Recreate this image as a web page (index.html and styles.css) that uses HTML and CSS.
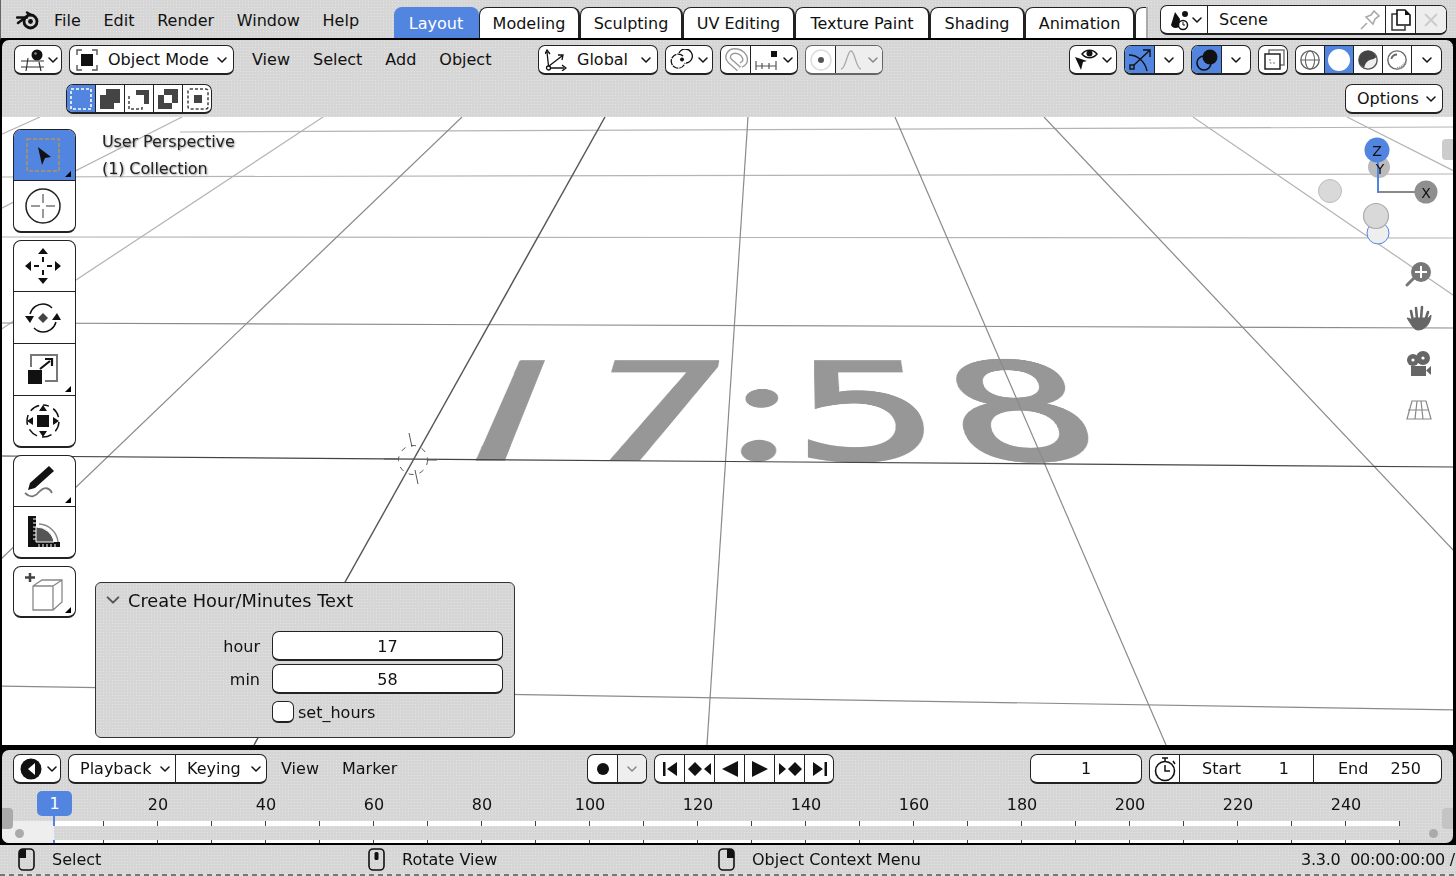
FILE: index.html
```html
<!DOCTYPE html>
<html lang="en">
<head>
    <meta charset="UTF-8">
    <title>Blender 3.3 - Layout</title>
    <link rel="stylesheet" href="styles.css">
</head>
<body>
<svg class="defs" width="0" height="0">
    <symbol id="chev" viewBox="0 0 10 6"><path d="M1 1l4 4 4-4" fill="none" stroke="currentColor" stroke-width="1.5" stroke-linecap="round" stroke-linejoin="round"/></symbol>
    <symbol id="corner" viewBox="0 0 6 6"><path d="M6 0v6H0z"/></symbol>
    <symbol id="mouse" viewBox="0 0 18 24"><rect x="1" y="1" width="15" height="21" rx="4" fill="none" stroke="#111" stroke-width="1.6"/></symbol>
</svg>

<div class="app">
    <!-- top bar -->
    <header class="topbar">
        <svg class="logo" width="24" height="20" viewBox="0 0 24 20"><circle cx="14.5" cy="11.5" r="6.5" fill="none" stroke="#111" stroke-width="2.8"/><circle cx="14.5" cy="11.5" r="2.4" fill="#111"/><path d="M11 2.5L15 5M1 7.5h10M2 13l8-6" stroke="#111" stroke-width="2.4" stroke-linecap="round"/></svg>
        <nav class="menu menu-top"><span>File</span><span>Edit</span><span>Render</span><span>Window</span><span>Help</span></nav>
        <div class="tabs">
            <span class="tab tab-active">Layout</span>
            <span class="tab tab-modeling">Modeling</span>
            <span class="tab tab-sculpting">Sculpting</span>
            <span class="tab tab-uv">UV Editing</span>
            <span class="tab tab-texture">Texture Paint</span>
            <span class="tab tab-shading">Shading</span>
            <span class="tab tab-animation">Animation</span>
            <span class="tab tab-cut"></span>
        </div>
        <div class="group scene">
            <span class="cell cell-scene-icon">
                <svg width="22" height="22" viewBox="0 0 22 22"><path d="M6 3l5 7-1 8c-3 2-7 1-8-2z" fill="#111"/><circle cx="16" cy="5" r="3" fill="#111"/><circle cx="14" cy="16" r="4.5" fill="#fff" stroke="#111" stroke-width="1.5"/><path d="M14 13v3h2" stroke="#111" fill="none"/></svg>
                <svg class="chev" width="10" height="6"><use href="#chev"/></svg>
            </span>
            <span class="cell cell-scene-name">Scene
                <svg width="22" height="22" viewBox="0 0 22 22"><path d="M2 20l6-6M7 8l7 7 2-5 4-3-5-5-3 4z" fill="none" stroke="#aaa" stroke-width="1.6"/></svg>
            </span>
            <span class="cell cell-icon">
                <svg width="22" height="22" viewBox="0 0 22 22"><path d="M7 5H2v16h13v-4" fill="none" stroke="#333" stroke-width="1.5"/><path d="M7 1h8l5 5v10H7z" fill="#fff" stroke="#111" stroke-width="1.6"/><path d="M15 1l5 5h-5z" fill="#111"/></svg>
            </span>
            <span class="cell cell-icon cell-off">
                <svg width="16" height="16" viewBox="0 0 16 16"><path d="M2 2l12 12M14 2L2 14" stroke="#ccc" stroke-width="2"/></svg>
            </span>
        </div>
    </header>

    <!-- 3d viewport -->
    <section class="area area-view">
        <div class="view-header">
            <div class="row row-first">
                <span class="group w-editor"><span class="cell cell-between">
                    <svg width="26" height="24" viewBox="0 0 26 24"><circle cx="17" cy="7" r="5.5" fill="#111"/><circle cx="15.500" cy="5.500" r="1.300" fill="#888"/><path d="M1 13h23M1 19h23M8 10l-2 13M19 14l2 9" stroke="#333" stroke-width="1.2" fill="none"/></svg>
                    <svg class="chev" width="10" height="6"><use href="#chev"/></svg>
                </span></span>
                <span class="group w-mode"><span class="cell cell-between">
                    <svg width="22" height="22" viewBox="0 0 22 22"><path d="M1 6V1h5M16 1h5v5M21 16v5h-5M6 21H1v-5" fill="none" stroke="#555" stroke-width="1.4"/><rect x="5" y="5" width="12" height="12" fill="#111"/></svg>
                    <span class="grow">Object Mode</span>
                    <svg class="chev" width="10" height="6"><use href="#chev"/></svg>
                </span></span>
                <nav class="menu menu-view"><span>View</span><span>Select</span><span>Add</span><span>Object</span></nav>
                <span class="group w-global"><span class="cell cell-between">
                    <svg width="22" height="22" viewBox="0 0 22 22"><circle cx="3.5" cy="19" r="2" fill="none" stroke="#111" stroke-width="1.3"/><path d="M3.5 17L2 3M0 5l2-4 3 4M5 19h14M17 16l4 3-4 3M4 17L17 7M13 6l5 0-1 5" fill="none" stroke="#111" stroke-width="1.3"/></svg>
                    <span class="grow">Global</span>
                    <svg class="chev" width="10" height="6"><use href="#chev"/></svg>
                </span></span>
                <span class="group w-pivot"><span class="cell cell-between">
                    <svg width="24" height="22" viewBox="0 0 24 22"><path d="M9 4a7 7 0 1 1 7 10" fill="none" stroke="#111" stroke-width="1.300"/><path d="M13 7a7 7 0 1 0 2 7" fill="none" stroke="#111" stroke-width="1.300" stroke-dasharray="6 1"/><circle cx="12" cy="10.500" r="2" fill="#111"/></svg>
                    <svg class="chev" width="10" height="6"><use href="#chev"/></svg>
                </span></span>
                <span class="group w-snap">
                    <span class="cell cell-icon">
                        <svg width="24" height="24" viewBox="0 0 24 24"><path d="M15 21L6 13C2 9 5 3 11 3c6 0 11 5 10 10-.5 2-2 3-4 4" fill="none" stroke="#999" stroke-width="6" stroke-linejoin="round"/><path d="M15 21L6 13C2 9 5 3 11 3c6 0 11 5 10 10-.5 2-2 3-4 4" fill="none" stroke="#fff" stroke-width="3.200"/></svg>
                    </span>
                    <span class="cell cell-between">
                        <svg width="22" height="24" viewBox="0 0 22 24"><rect x="16" y="3" width="6" height="6" fill="#111"/><path d="M1 13v9M21 13v9M1 18h20M7 15v6M14 15v6" stroke="#555" stroke-width="1.2"/></svg>
                        <svg class="chev" width="10" height="6"><use href="#chev"/></svg>
                    </span>
                </span>
                <span class="group w-prop">
                    <span class="cell cell-icon">
                        <svg width="22" height="22" viewBox="0 0 22 22"><circle cx="11" cy="11" r="10" fill="none" stroke="#ddd" stroke-width="1.5"/><circle cx="11" cy="11" r="3" fill="#555"/></svg>
                    </span>
                    <span class="cell cell-between cell-off">
                        <svg width="22" height="22" viewBox="0 0 22 22"><path d="M1 20c5 0 6-18 10-18s5 18 10 18" fill="none" stroke="#aaa" stroke-width="1.3"/></svg>
                        <svg class="chev chev-off" width="10" height="6"><use href="#chev"/></svg>
                    </span>
                </span>

                <span class="group w-vis push"><span class="cell cell-between">
                    <svg width="24" height="24" viewBox="0 0 24 24"><path d="M1 9l12 4-4 1-2 8z" fill="#111"/><path d="M8 6c4-5 11-5 15 0-4 5-11 5-15 0z" fill="#fff" stroke="#111" stroke-width="1.4"/><circle cx="15.5" cy="5.5" r="3" fill="#111"/></svg>
                    <svg class="chev" width="10" height="6"><use href="#chev"/></svg>
                </span></span>
                <span class="group w-gizmo">
                    <span class="cell cell-icon cell-on">
                        <svg width="24" height="24" viewBox="0 0 24 24"><rect x="2" y="17" width="4" height="4" fill="none" stroke="#111" stroke-width="1.4"/><path d="M1 7c8 0 16 6 18 16M6 17L21 3M15 2h7v7" fill="none" stroke="#111" stroke-width="1.4"/></svg>
                    </span>
                    <span class="cell cell-chev"><svg class="chev" width="10" height="6"><use href="#chev"/></svg></span>
                </span>
                <span class="group w-gizmo">
                    <span class="cell cell-icon cell-on">
                        <svg width="24" height="24" viewBox="0 0 24 24"><circle cx="15" cy="9" r="7.5" fill="#111"/><circle cx="9" cy="15" r="7" fill="none" stroke="#111" stroke-width="1.6"/></svg>
                    </span>
                    <span class="cell cell-chev"><svg class="chev" width="10" height="6"><use href="#chev"/></svg></span>
                </span>
                <span class="group w-xray"><span class="cell cell-icon">
                    <svg width="24" height="24" viewBox="0 0 24 24"><path d="M7 6V2h15v15h-4" fill="none" stroke="#777" stroke-width="1.5"/><rect x="3" y="6" width="15" height="15" fill="none" stroke="#222" stroke-width="1.5"/><path d="M8 11v4h5" fill="none" stroke="#777" stroke-dasharray="2 1.5"/></svg>
                </span></span>
                <span class="group w-shading">
                    <span class="cell cell-icon"><svg width="22" height="22" viewBox="0 0 24 24"><circle cx="12" cy="12" r="10" fill="none" stroke="#666" stroke-width="1.5"/><ellipse cx="12" cy="12" rx="5" ry="10" fill="none" stroke="#666" stroke-width="1.2"/><path d="M2 12h20" stroke="#666" stroke-width="1.2"/></svg></span>
                    <span class="cell cell-icon cell-on"><svg width="24" height="24" viewBox="0 0 24 24"><circle cx="12" cy="12" r="11" fill="#fff"/></svg></span>
                    <span class="cell cell-icon"><svg width="22" height="22" viewBox="0 0 24 24"><circle cx="12" cy="12" r="10" fill="#eee" stroke="#555" stroke-width="1.5"/><path d="M12 2a10 10 0 0 0-10 10c0 4 3 7 6 8 1-5 4-8 10-9l3-2c-2-4-5-7-9-7z" fill="#444"/></svg></span>
                    <span class="cell cell-icon"><svg width="22" height="22" viewBox="0 0 24 24"><circle cx="12" cy="12" r="10" fill="none" stroke="#666" stroke-width="1.5"/><path d="M6 11c0-3 3-5 6-5" fill="none" stroke="#666" stroke-width="2"/><path d="M21 15c-2 4-5 6-9 6" fill="none" stroke="#999" stroke-width="3" stroke-dasharray="1.5 1"/></svg></span>
                    <span class="cell cell-chev"><svg class="chev" width="10" height="6"><use href="#chev"/></svg></span>
                </span>
            </div>
            <div class="row row-second">
                <span class="group w-selmode">
                    <span class="cell cell-icon cell-on"><svg width="22" height="22" viewBox="0 0 22 22"><rect x="1" y="1" width="20" height="20" fill="none" stroke="#fff" stroke-width="1.6" stroke-dasharray="3 2"/></svg></span>
                    <span class="cell cell-icon"><svg width="22" height="22" viewBox="0 0 22 22"><path d="M7 1h14v14h-6v6H1V7h6z" fill="#444"/></svg></span>
                    <span class="cell cell-icon"><svg width="22" height="22" viewBox="0 0 22 22"><path d="M8 2h13v14h-5V7H8z" fill="#444"/><path d="M1 8v13h13v-3" fill="none" stroke="#444" stroke-width="1.5" stroke-dasharray="3 2"/></svg></span>
                    <span class="cell cell-icon"><svg width="22" height="22" viewBox="0 0 22 22"><path d="M7 1h14v14h-6v6H1V7h6zM7 7v8h8V7z" fill="#444" fill-rule="evenodd"/></svg></span>
                    <span class="cell cell-icon"><svg width="22" height="22" viewBox="0 0 22 22"><rect x="1" y="1" width="20" height="20" rx="2" fill="none" stroke="#444" stroke-width="1.5" stroke-dasharray="3 2"/><rect x="7" y="7" width="8" height="8" fill="#444"/></svg></span>
                </span>
                <span class="group w-options push"><span class="cell cell-between"><span>Options</span><svg class="chev" width="10" height="6"><use href="#chev"/></svg></span></span>
            </div>
        </div>

        <div class="viewport">
            <div class="clock-text"><span class="clock-one">1</span>7<span class="clock-colon">:</span><span class="clock-five">5</span>8</div>

            <svg class="grid" width="1456" height="628" viewBox="0 117 1456 628">
                <g stroke="#b4b4b4" stroke-width="1.200" fill="none">
                    <path d="M180 132L1456 127"/>
                    <path d="M0 177L1456 174"/>
                    <path d="M0 237L1456 238"/>
                    <path d="M0 135L40 117"/>
                    <path d="M0 209L182 117"/>
                    <path d="M0 330L323 117"/>
                    <path d="M1193 117L1456 297"/>
                    <path d="M1347 117L1456 172"/>
                </g>
                <g stroke="#8a8a8a" stroke-width="1.200" fill="none">
                    <path d="M0 323L1456 328"/>
                    <path d="M0 560L462 117"/>
                    <path d="M0 686L1456 710"/>
                    <path d="M748 117L707 745"/>
                    <path d="M895 117L1166 745"/>
                    <path d="M1044 117L1456 553"/>
                </g>
                <path d="M0 456L1456 467" stroke="#444" stroke-width="1.200" fill="none"/>
                <path d="M605 117L254 745" stroke="#555" stroke-width="1.400" fill="none"/>
                <g fill="none" stroke="#555" stroke-width="1">
                    <circle cx="413" cy="460" r="14.5" stroke-dasharray="5 6"/>
                    <path d="M409 433l3 14M415 470l3 14M384 459h14M427 460h10"/>
                </g>

                <circle cx="1379" cy="167" r="11" fill="#bbb"/>
                <path d="M1378 192h38" stroke="#888" stroke-width="2"/>
                <path d="M1378 160v33" stroke="#5285e0" stroke-width="2"/>
                <circle cx="1377" cy="150" r="12.5" fill="#5285e0"/>
                <circle cx="1426" cy="192" r="11.5" fill="#8f8f8f"/>
                <circle cx="1330" cy="191" r="11.5" fill="#d9d9d9" stroke="#bbb"/>
                <circle cx="1378" cy="233" r="11" fill="#eee" stroke="#5285e0"/>
                <circle cx="1376" cy="216" r="12.5" fill="#d9d9d9" stroke="#aaa" stroke-width="1.2"/>
                <g class="axis-label">
                    <text x="1377" y="156">Z</text>
                    <text x="1380" y="174" fill="#555">Y</text>
                    <text x="1426" y="198">X</text>
                </g>

                <g fill="#777">
                    <circle cx="1421" cy="272" r="10"/>
                    <path d="M1414 278l-7 7" stroke="#777" stroke-width="3" stroke-linecap="round"/>
                    <path d="M1421 266v12M1415 272h12" stroke="#fff" stroke-width="2"/>
                </g>
                <g fill="#666" stroke="#666">
                    <path d="M1413 321l-2-10M1417 319l-1-11M1421 319l1-12M1425 321l3-9" stroke-width="2.600" stroke-linecap="round" fill="none"/>
                    <path d="M1407 318c3 0 5 2 6 3l1-3h13c2 0 3-2 4-3 0 7-5 15-13 15-5 0-8-8-11-12z"/>
                </g>
                <g fill="#666">
                    <circle cx="1413" cy="360" r="6"/>
                    <circle cx="1423" cy="358" r="7"/>
                    <rect x="1411" y="366" width="15" height="10"/>
                    <path d="M1431 366v9l-5-4.500z"/>
                    <circle cx="1413" cy="360" r="1.600" fill="#fff"/>
                    <circle cx="1423" cy="358" r="1.600" fill="#fff"/>
                </g>
                <g fill="none" stroke="#888" stroke-width="1.2">
                    <path d="M1412 401h14l5 18h-24z"/>
                    <path d="M1408 410h21M1417 401l-2 18M1421 401l2 18"/>
                </g>
            </svg>

            <div class="view-info">
                <div>User Perspective</div>
                <div>(1) Collection</div>
            </div>

            <div class="handle-view"></div>

            <aside class="toolbar">
                <div class="tool-group">
                    <span class="tool tool-on">
                        <svg width="36" height="36" viewBox="0 0 36 36"><rect x="2" y="2" width="32" height="32" fill="none" stroke="#9c8f7c" stroke-width="2" stroke-dasharray="4 2"/><path d="M13 10l13 10-6 1-3 7z" fill="#111"/></svg>
                        <svg class="corner" width="6" height="6"><use href="#corner"/></svg>
                    </span>
                    <span class="tool">
                        <svg width="36" height="36" viewBox="0 0 36 36"><circle cx="18" cy="18" r="17" fill="none" stroke="#222" stroke-width="1.5"/><path d="M18 6v9M18 21v9M6 18h9M21 18h9" stroke="#777" stroke-width="1.5"/></svg>
                    </span>
                </div>
                <div class="tool-group">
                    <span class="tool">
                        <svg width="36" height="36" viewBox="0 0 36 36"><path d="M18 0l5 6H13zM18 36l-5-6h10zM0 18l6-5v10zM36 18l-6 5V13z" fill="#111"/><path d="M18 9v5M18 22v5M9 18h5M22 18h5" stroke="#111" stroke-width="2"/></svg>
                    </span>
                    <span class="tool">
                        <svg width="36" height="36" viewBox="0 0 36 36"><path d="M18 13l5 5-5 5-5-5z" fill="#444"/><path d="M5 14C7 7 13 4 18 4c4 0 7 2 9 4M31 22c-2 7-8 10-13 10-4 0-7-2-9-4" fill="none" stroke="#111" stroke-width="1.5"/><path d="M0 16h9l-4 7zM27 20h9l-4-7z" fill="#111"/></svg>
                    </span>
                    <span class="tool">
                        <svg width="36" height="36" viewBox="0 0 36 36"><path d="M6 15V3h26v26H20" fill="none" stroke="#777" stroke-width="2"/><rect x="3" y="18" width="14" height="14" fill="#111"/><path d="M15 17l10-8M20 7h7v7" stroke="#111" stroke-width="2.200" fill="none"/></svg>
                        <svg class="corner" width="6" height="6"><use href="#corner"/></svg>
                    </span>
                    <span class="tool">
                        <svg width="36" height="36" viewBox="0 0 36 36"><path d="M18 2a16 16 0 0 1 16 16 16 16 0 0 1-16 16A16 16 0 0 1 2 18 16 16 0 0 1 18 2z" fill="none" stroke="#111" stroke-width="1.500" stroke-dasharray="10 5" stroke-dashoffset="4"/><rect x="12" y="12" width="12" height="12" fill="#111"/><path d="M18 2l4 6h-8zM18 34l-4-6h8zM2 18l6-4v8zM34 18l-6 4v-8z" fill="#111"/></svg>
                    </span>
                </div>
                <div class="tool-group">
                    <span class="tool">
                        <svg width="40" height="36" viewBox="0 0 40 36"><path d="M26 3l5 5-19 17-7 2 2-7z" fill="#111"/><path d="M2 30c6 6 11 3 15-2 4-4 9-4 12 2" fill="none" stroke="#777" stroke-width="1.800"/></svg>
                        <svg class="corner" width="6" height="6"><use href="#corner"/></svg>
                    </span>
                    <span class="tool">
                        <svg width="36" height="36" viewBox="0 0 36 36"><path d="M3 2h8v26h24v5H3z" fill="#111"/><path d="M11 13a18 18 0 0 1 18 15H11z" fill="#555" stroke="#fff" stroke-width="1"/><path d="M14 10a20 20 0 0 1 19 18" fill="none" stroke="#888" stroke-width="1.500"/><path d="M8 5h3M8 9h3M8 13h3M8 17h3M8 21h3M8 25h3M14 30v3M18 30v3M22 30v3M26 30v3M30 30v3" stroke="#fff"/></svg>
                    </span>
                </div>
                <div class="tool-group">
                    <span class="tool">
                        <svg width="42" height="42" viewBox="0 0 42 42"><path d="M8 2v9M3 6.500h10" stroke="#444" stroke-width="2.500"/><path d="M11 15l9-6h20v22l-9 8H11zM11 15h20v24M31 15l9-6" fill="#fff" stroke="#888" stroke-width="1.300"/></svg>
                        <svg class="corner" width="6" height="6"><use href="#corner"/></svg>
                    </span>
                </div>
            </aside>

            <section class="op-panel">
                <div class="op-title">
                    <svg class="chev-panel" width="14" height="8"><use href="#chev"/></svg>
                    Create Hour/Minutes Text
                </div>
                <div class="op-row">
                    <label>hour</label>
                    <span class="op-field">17</span>
                </div>
                <div class="op-row">
                    <label>min</label>
                    <span class="op-field">58</span>
                </div>
                <div class="op-row op-row-check">
                    <label></label>
                    <span class="op-check"></span>
                    <span class="op-check-label">set_hours</span>
                </div>
            </section>
        </div>
    </section>

    <!-- timeline -->
    <section class="area area-time">
        <div class="row row-time">
            <span class="group w-editor"><span class="cell cell-between">
                <svg width="24" height="24" viewBox="0 0 24 24"><circle cx="12" cy="12" r="10.500" fill="#111"/><path d="M16 6l-7 6 7 6z" fill="#fff"/></svg>
                <svg class="chev" width="10" height="6"><use href="#chev"/></svg>
            </span></span>
            <span class="group w-playback">
                <span class="cell cell-between w-play"><span>Playback</span><svg class="chev" width="10" height="6"><use href="#chev"/></svg></span>
                <span class="cell cell-between w-key"><span>Keying</span><svg class="chev" width="10" height="6"><use href="#chev"/></svg></span>
            </span>
            <nav class="menu menu-time"><span>View</span><span>Marker</span></nav>
            <span class="group w-record">
                <span class="cell cell-icon"><svg width="14" height="14" viewBox="0 0 14 14"><circle cx="7" cy="7" r="6" fill="#111"/></svg></span>
                <span class="cell cell-icon cell-off"><svg class="chev chev-off" width="10" height="6"><use href="#chev"/></svg></span>
            </span>
            <span class="group w-transport">
                <span class="cell cell-icon"><svg width="16" height="16" viewBox="0 0 16 16"><path d="M1 1h2.500v14H1zM15 1v14L5 8z" fill="#111"/></svg></span>
                <span class="cell cell-icon"><svg width="24" height="16" viewBox="0 0 24 16"><path d="M7 1l7 7-7 7-7-7zM23 2v12l-7-6z" fill="#111"/></svg></span>
                <span class="cell cell-icon"><svg width="18" height="18" viewBox="0 0 18 18"><path d="M17 1v16L1 9z" fill="#111"/></svg></span>
                <span class="cell cell-icon"><svg width="18" height="18" viewBox="0 0 18 18"><path d="M1 1v16l16-8z" fill="#111"/></svg></span>
                <span class="cell cell-icon"><svg width="24" height="16" viewBox="0 0 24 16"><path d="M1 2v12l7-6zM17 1l7 7-7 7-7-7z" fill="#111"/></svg></span>
                <span class="cell cell-icon"><svg width="16" height="16" viewBox="0 0 16 16"><path d="M1 1v14l10-7zM12.500 1H15v14h-2.500z" fill="#111"/></svg></span>
            </span>
            <span class="group w-frame push"><span class="cell cell-center">1</span></span>
            <span class="group w-range">
                <span class="cell cell-icon"><svg width="24" height="26" viewBox="0 0 24 26"><circle cx="12" cy="15" r="9.500" fill="none" stroke="#111" stroke-width="1.600"/><path d="M12 9v6h5M9 2h6M12 2v4M20 5l2 3" fill="none" stroke="#111" stroke-width="1.500"/></svg></span>
                <span class="cell cell-pair w-start"><span>Start</span><span>1</span></span>
                <span class="cell cell-pair w-end"><span>End</span><span>250</span></span>
            </span>
        </div>

        <div class="ruler-labels">
            <span>20</span><span>40</span><span>60</span><span>80</span><span>100</span><span>120</span>
            <span>140</span><span>160</span><span>180</span><span>200</span><span>220</span><span>240</span>
        </div>
        <div class="ruler-band"></div>
        <div class="ruler-scroll">
            <i class="scroll-dot"></i>
            <i class="scroll-dot"></i>
        </div>
        <div class="ruler-band ruler-band-low"></div>

        <div class="frame-badge">1</div>
        <div class="frame-line"></div>
        <div class="handle-time"></div>
        <div class="handle-time handle-time-right"></div>
    </section>

    <!-- status bar -->
    <footer class="status">
        <span class="status-item item-select">
            <svg width="18" height="24" viewBox="0 0 18 24"><use href="#mouse"/><path d="M1 5a4 4 0 0 1 4-4h3v9H1z" fill="#111"/></svg>
            Select
        </span>
        <span class="status-item item-rotate">
            <svg width="18" height="24" viewBox="0 0 18 24"><use href="#mouse"/><rect x="6.500" y="4" width="4" height="8" rx="1.500" fill="#111"/></svg>
            Rotate View
        </span>
        <span class="status-item item-context">
            <svg width="18" height="24" viewBox="0 0 18 24"><use href="#mouse"/><path d="M9 1h3a4 4 0 0 1 4 4v5H9z" fill="#111"/></svg>
            Object Context Menu
        </span>
        <span class="status-info">3.3.0&nbsp; 00:00:00:00 /</span>
    </footer>
    <div class="status-strip"></div>
</div>
</body>
</html>
```

FILE: styles.css
```css
/* General Reset */
* {
    margin: 0;
    padding: 0;
    box-sizing: border-box;
}

html, body {
    width: 1456px;
    height: 876px;
    overflow: hidden;
}

body {
    font-family: "DejaVu Sans", sans-serif;
    font-size: 16px;
    color: #111;
    background: #000;
}

.defs {
    position: absolute;
}

.app {
    display: flex;
    flex-direction: column;
    height: 876px;
    overflow: hidden;
    background: #000;
}

/* dotted grey used on all the editor chrome */
.topbar, .view-header, .area-time, .status, .op-panel {
    background-color: #d6d6d6;
    background-image: radial-gradient(circle, #e4e4e4 0.7px, transparent 1px);
    background-size: 3px 3px;
}

/* top bar */
.topbar {
    display: flex;
    align-items: flex-start;
    height: 40px;
    border-bottom: 2px solid #000;
    border-left: 1px solid #666;
    flex: none;
}

.logo {
    margin: 10px 0 0 15px;
}

.menu {
    display: flex;
    line-height: 20px;
}

.menu-top {
    margin: 11px 0 0 14px;
    gap: 22.7px;
    width: 340px;
}

.tabs {
    display: flex;
    align-self: flex-end;
    height: 31px;
    margin-bottom: 0;
    width: 754px;
    border-right: 2px solid #aaa;
    position: relative;
}

.tab {
    background: #fff;
    border: 1px solid #222;
    border-bottom: none;
    border-right-width: 2px;
    border-radius: 8px 8px 0 0;
    text-align: center;
    line-height: 31px;
    flex: none;
}

.tab-active {
    width: 85px;
    background: #5285e0;
    border-color: #5285e0;
    color: #fff;
}

.tab-modeling { width: 101px; }
.tab-sculpting { width: 103px; }
.tab-uv { width: 112px; }
.tab-texture { width: 135px; }
.tab-shading { width: 95px; }
.tab-animation { width: 110px; }
.tab-cut { width: 11px; border-right: none; border-radius: 8px 0 0 0; }

.scene {
    margin: 5px 0 0 12px;
    width: 287px;
}

.cell-scene-icon {
    width: 47px;
    justify-content: space-between;
    padding: 0 5px 0 8px;
}

.cell-scene-name {
    flex: 1;
    justify-content: space-between;
    padding: 0 4px 0 11px;
}

/* widgets */
.group {
    display: flex;
    height: 30px;
    background: #fff;
    border: 1px solid #222;
    border-bottom-width: 2px;
    border-radius: 7px;
    overflow: hidden;
    flex: none;
}

.cell {
    display: flex;
    align-items: center;
    height: 100%;
    line-height: 1;
    border-right: 1px solid #222;
}

.cell:last-child {
    border-right: none;
}

.cell svg {
    flex: none;
}

.cell-icon {
    justify-content: center;
    width: 30px;
    flex: none;
}

.cell-between {
    justify-content: space-between;
    padding: 0 6px;
    flex: 1;
}

.cell-center {
    justify-content: center;
    flex: 1;
}

.cell-chev {
    justify-content: center;
    flex: 1;
}

.cell-on {
    background-color: #5285e0;
}

.cell-off {
    background: #eeeeee;
}

.chev {
    color: #111;
    flex: none;
}

.chev-off {
    color: #888;
}

.grow {
    flex: 1;
    padding-left: 10px;
}

.push {
    margin-left: auto;
}

.row {
    display: flex;
    align-items: flex-start;
}

/* 3d view */
.area {
    flex: none;
    margin: 0 3px 0 2px;
    border-radius: 7px;
    overflow: hidden;
    position: relative;
}

.area-view {
    height: 705px;
    display: flex;
    flex-direction: column;
    border-radius: 7px 7px 0 0;
}

.view-header {
    height: 77px;
    flex: none;
}

.row-first {
    padding: 5px 11px 0 12px;
    height: 44px;
}

.row-second {
    padding: 0 10px 0 64px;
}

.row-second .w-options .cell {
    padding-top: 1px;
}

.w-editor { width: 48px; margin-right: 7px; }
.w-editor .cell-between { padding: 0 3px 0 5px; }
.w-mode { width: 165px; }
.menu-view { margin: 5px 0 0 18px; gap: 23px; width: 286px; }
.w-global { width: 120px; }
.w-pivot { width: 48px; margin-left: 7px; }
.w-pivot .cell-between { padding: 0 4px; }
.w-snap { width: 78px; margin-left: 7px; }
.w-snap .cell-between { padding: 0 4px; }
.w-prop { width: 78px; margin-left: 7px; border-color: #666; }
.w-prop .cell-between { padding: 0 4px; }
.w-vis { width: 48px; }
.w-vis .cell-between { padding: 0 4px; }
.w-gizmo { width: 60px; margin-left: 7px; }
.w-xray { width: 30px; margin-left: 7px; }
.w-shading { width: 147px; margin-left: 7px; }
.w-shading .cell-icon { width: 29px; }
.w-selmode { width: 146px; }
.w-selmode .cell-icon { width: 29px; }
.w-options { width: 98px; }
.w-options .cell-between { padding: 0 6px 0 11px; }

.viewport {
    flex: 1;
    position: relative;
    background: #fff;
    overflow: hidden;
}

.grid {
    position: absolute;
    left: -2px;
    top: 0;
}

.axis-label text {
    font-size: 14px;
    text-anchor: middle;
    fill: #111;
}

/* the clock lies flat on the floor, so it gets the view's perspective */
.clock-text {
    position: absolute;
    left: -2px;
    top: 0;
    font-size: 100px;
    line-height: 100px;
    white-space: nowrap;
    color: #979797;
    -webkit-text-stroke: 2px #979797;
    transform-origin: 0 0;
    transform: matrix3d(2.47, 0, 0, 0, -1.670, 0.832, 0, -0.00208, 0, 0, 1, 0, 549.3, 272.6, 0, 1.176);
}

/* the 1 in this font has a flag and a foot, the scene's one is just a stem */
.clock-one {
    display: inline-block;
    margin-right: 1px;
    clip-path: inset(0 24.3px 0 27.5px);
}

/* round dots, tighter than the font's own spacing. line-height 0 so that
   the other font's metrics don't move the baseline of the line */
.clock-colon {
    display: inline-block;
    width: 27px;
    line-height: 0;
    text-align: center;
    font-family: Lato, sans-serif;
}

.clock-five {
    letter-spacing: 3px;
}

.view-info {
    position: absolute;
    left: 100px;
    top: 11px;
    line-height: 27px;
    letter-spacing: -0.1px;
    color: #222;
    text-shadow: 1px 1px 2px #999;
}

.handle-view {
    position: absolute;
    right: 0;
    top: 22px;
    width: 11px;
    height: 21px;
    background: #ccc;
    border-radius: 4px 0 0 4px;
}

.toolbar {
    position: absolute;
    left: 11px;
    top: 12px;
    display: flex;
    flex-direction: column;
    gap: 7px;
}

.tool-group {
    width: 63px;
    background: #fff;
    border: 1px solid #222;
    border-bottom-width: 2px;
    border-radius: 8px;
    overflow: hidden;
}

.tool {
    display: flex;
    align-items: center;
    justify-content: center;
    height: 52px;
    padding-right: 3px;
    position: relative;
    border-bottom: 1px solid #222;
}

.tool:first-child {
    height: 51px;
}

.tool:last-child {
    border-bottom: none;
    height: 50px;
}

.tool:only-child {
    height: 49px;
}

.tool-on {
    background: #5285e0;
}

.corner {
    position: absolute;
    right: 4px;
    bottom: 3px;
}

/* redo panel */
.op-panel {
    position: absolute;
    left: 93px;
    top: 465px;
    width: 420px;
    height: 156px;
    border: 1px solid #333;
    border-radius: 6px;
    padding: 0 11px 0 10px;
}

.op-title {
    display: flex;
    align-items: center;
    gap: 8px;
    height: 34px;
    font-size: 17.8px;
    margin-bottom: 14px;
}

.chev-panel {
    color: #555;
}

.op-row {
    display: flex;
    align-items: center;
    height: 30px;
    margin-bottom: 3px;
}

.op-row label {
    width: 154px;
    margin-right: 12px;
    text-align: right;
}

.op-field {
    flex: 1;
    height: 30px;
    line-height: 29px;
    text-align: center;
    background: #fff;
    border: 1px solid #222;
    border-bottom-width: 2px;
    border-radius: 7px;
}

.op-row-check {
    height: 22px;
    margin-top: 7px;
}

.op-check {
    width: 22px;
    height: 22px;
    background: #fff;
    border: 1px solid #222;
    border-bottom-width: 2px;
    border-radius: 6px;
    margin-right: 4px;
}

/* timeline */
.area-time {
    height: 93px;
    margin-top: 5px;
    margin-bottom: 2px;
}

.row-time {
    padding: 4px 11px 0 11px;
    height: 44px;
}

.w-playback { width: 199px; }
.w-play { width: 107px; flex: none; padding: 0 5px 0 11px; }
.w-key { padding: 0 5px 0 11px; }
.menu-time { margin: 5px 0 0 14px; gap: 23px; width: 306px; }
.w-record { width: 60px; }
.w-record .cell-off { flex: 1; }
.w-transport { width: 180px; margin-left: 7px; }
.w-frame { width: 112px; }
.w-range { width: 293px; margin-left: 7px; }
.cell-pair { justify-content: space-between; }
.w-start { width: 134px; padding: 0 24px 0 22px; flex: none; }
.w-end { flex: 1; padding: 0 20px 0 24px; }

.ruler-labels {
    display: flex;
    padding: 1px 0 0 102px;
    height: 21px;
    line-height: 20px;
}

.ruler-labels span {
    width: 108px;
    flex: none;
    text-align: center;
}

.ruler-band {
    height: 5px;
    margin-top: 6px;
    background:
        repeating-linear-gradient(90deg, #444 0 1px, transparent 1px 54px) 101px 0 / 1297px 100% no-repeat,
        linear-gradient(90deg, #eee 52px, #fff 52px, #fff 1397px, transparent 1397px);
}

.ruler-band-low {
    height: 3px;
    margin-top: 0;
}

.ruler-scroll {
    display: flex;
    justify-content: space-between;
    align-items: center;
    height: 14px;
    padding: 0 15px 0 13px;
    background: linear-gradient(90deg, #eee 52px, transparent 52px);
}

.scroll-dot {
    width: 9px;
    height: 9px;
    border-radius: 50%;
    background: #aaa;
}

.frame-badge {
    position: absolute;
    left: 35px;
    top: 41px;
    width: 35px;
    height: 25px;
    line-height: 26px;
    text-align: center;
    color: #fff;
    background: #5285e0;
    border-radius: 5px;
}

.frame-line {
    position: absolute;
    left: 51px;
    top: 66px;
    bottom: 0;
    width: 2px;
    background: linear-gradient(#5285e0 10px, transparent 10px, transparent 24px, #5285e0 24px);
}

.handle-time {
    position: absolute;
    left: 0;
    top: 58px;
    width: 11px;
    height: 21px;
    background: #aaa;
    border-radius: 0 4px 4px 0;
}

.handle-time-right {
    left: auto;
    right: 0;
    background: #c4c4c4;
    border-radius: 4px 0 0 4px;
}

/* status bar */
.status {
    display: flex;
    align-items: center;
    height: 29px;
    flex: none;
    position: relative;
    white-space: nowrap;
}

.status-item {
    display: flex;
    align-items: center;
    gap: 16px;
    width: 350px;
    flex: none;
}

.item-select {
    margin-left: 18px;
}

.status-info {
    position: absolute;
    right: 1px;
    letter-spacing: -0.25px;
}

.status-strip {
    height: 2px;
    flex: none;
    background: repeating-linear-gradient(90deg, #777 0 5px, #ddd 5px 9px);
}
```
